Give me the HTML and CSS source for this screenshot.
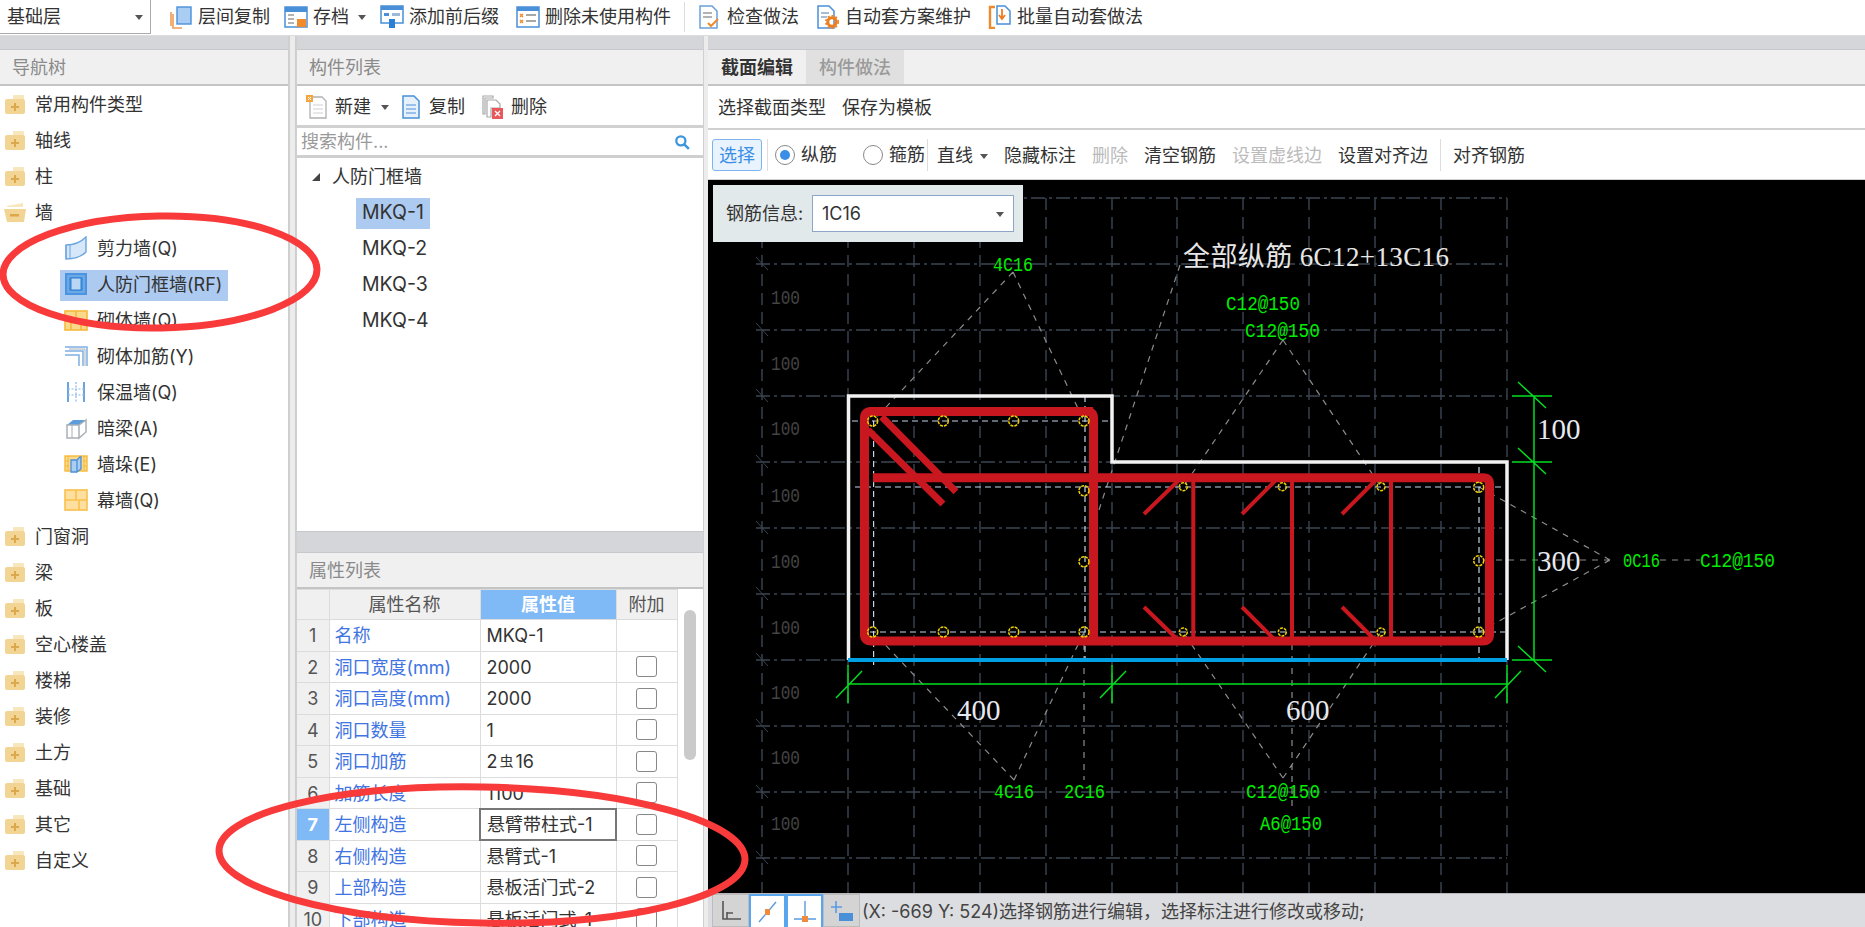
FILE: index.html
```html
<!DOCTYPE html>
<html lang="zh-CN">
<head>
<meta charset="utf-8">
<title>人防门框墙</title>
<link rel="stylesheet" href="styles.css">
</head>
<body>
<svg class="defs" width="0" height="0" aria-hidden="true">
  <symbol id="folder" viewBox="0 0 24 24"><path d="M10 3h10a1 1 0 0 1 1 1v4H10z" fill="#f8e6bd"/><rect x="2" y="7" width="20" height="15" rx="2" fill="#f2d595"/><path d="M11 11h2v3h3v2h-3v3h-2v-3H8v-2h3z" fill="#dca84b"/></symbol>
  <symbol id="folder-open" viewBox="0 0 24 24"><path d="M4 6l16-3v4H4z" fill="#f8e6bd"/><path d="M1 9h22l-2 13H4z" fill="#f2d595"/><rect x="7" y="14" width="9" height="2.5" fill="#dca84b"/></symbol>
  <symbol id="arrow" viewBox="0 0 8 6"><path d="M0 1h8L4 6z" fill="#555"/></symbol>
</svg>

<header class="topbar">
  <div class="combo"><span>基础层</span><svg class="arrow"><use href="#arrow"/></svg></div>
  <div class="tools">
    <button class="tool">
      <svg class="ticon" viewBox="0 0 24 24"><path d="M4 9v14h9M2 7v14" fill="none" stroke="#ee9a55" stroke-width="1.6"/><rect x="8" y="2" width="14" height="17" fill="#a9cdf3" stroke="#4a90d9" stroke-width="1.4"/></svg>
      <span>层间复制</span>
    </button>
    <button class="tool">
      <svg class="ticon" viewBox="0 0 24 24"><rect x="1" y="2" width="22" height="20" fill="#fff" stroke="#4a90d9" stroke-width="1.5"/><rect x="1" y="2" width="22" height="5" fill="#4a90d9"/><path d="M4 10h6M4 14h6M4 18h6" stroke="#9a9a9a" stroke-width="1.4"/><rect x="13" y="14" width="9" height="8" fill="#f08a2c"/></svg>
      <span>存档</span><svg class="arrow arrow-tool"><use href="#arrow"/></svg>
    </button>
    <button class="tool">
      <svg class="ticon" viewBox="0 0 24 24"><rect x="1" y="1" width="22" height="17" fill="#fff" stroke="#4a90d9" stroke-width="1.5"/><rect x="1" y="1" width="22" height="4" fill="#4a90d9"/><rect x="4" y="8" width="5" height="3" fill="#4a90d9"/><rect x="12" y="8" width="8" height="3" fill="#9db8d8"/><rect x="9" y="14" width="6" height="9" fill="#2b7fd4"/></svg>
      <span>添加前后缀</span>
    </button>
    <button class="tool tool-gap">
      <svg class="ticon" viewBox="0 0 24 24"><rect x="1" y="2" width="22" height="20" fill="#fff" stroke="#4a90d9" stroke-width="1.5"/><rect x="1" y="2" width="22" height="4" fill="#4a90d9"/><path d="M4 9l3 3m0-3l-3 3M4 15l3 3m0-3l-3 3" stroke="#f08a2c" stroke-width="1.4"/><path d="M10 10h10M10 16h10" stroke="#8a8a8a" stroke-width="1.5"/></svg>
      <span>删除未使用构件</span>
    </button>
    <i class="vsep"></i>
    <button class="tool">
      <svg class="ticon" viewBox="0 0 24 24"><path d="M2 1h12l5 5v17H2z" fill="#fff" stroke="#6aa0d8" stroke-width="1.5"/><path d="M5 8h9M5 12h9" stroke="#9a9a9a" stroke-width="1.3"/><path d="M10 18l3 3 7-7" fill="none" stroke="#ee8a2e" stroke-width="2"/></svg>
      <span>检查做法</span>
    </button>
    <button class="tool tool-gap">
      <svg class="ticon" viewBox="0 0 24 24"><path d="M2 1h11l5 5v17H2z" fill="#fff" stroke="#4a90d9" stroke-width="1.5"/><path d="M5 8h8M5 12h6" stroke="#8aa8c8" stroke-width="1.3"/><circle cx="16" cy="17" r="4.2" fill="none" stroke="#ee7d1e" stroke-width="3"/><circle cx="16" cy="17" r="6.2" fill="none" stroke="#ee7d1e" stroke-width="1.6" stroke-dasharray="2 2"/></svg>
      <span>自动套方案维护</span>
    </button>
    <button class="tool tool-gap">
      <svg class="ticon" viewBox="0 0 24 24"><path d="M7 2H2v21h5" fill="none" stroke="#ee8a2e" stroke-width="2.4"/><path d="M9 1h8l5 5v13H9z" fill="#fff" stroke="#4a90d9" stroke-width="1.5"/><path d="M14 4v9m-3-3l3 4 3-4" fill="none" stroke="#ee7d1e" stroke-width="1.8"/></svg>
      <span>批量自动套做法</span>
    </button>
  </div>
</header>

<main class="work">
  <aside class="nav">
    <div class="band"></div>
    <div class="phead">导航树</div>
    <ul class="tree">
      <li class="node"><svg class="ficon"><use href="#folder"/></svg>常用构件类型</li>
      <li class="node"><svg class="ficon"><use href="#folder"/></svg>轴线</li>
      <li class="node"><svg class="ficon"><use href="#folder"/></svg>柱</li>
      <li class="node"><svg class="ficon"><use href="#folder-open"/></svg>墙</li>
      <li class="leaf"><span class="leaf-in">
        <svg class="licon" viewBox="0 0 24 24"><path d="M2 9c8 0 15-3 20-8v15c-5 5-12 7-20 7z" fill="#d5e7f8" stroke="#6aa5df" stroke-width="1.4"/><path d="M2 9v14M6 8.6v14" stroke="#6aa5df" stroke-width="1"/></svg>剪力墙(Q)</span></li>
      <li class="leaf"><span class="leaf-in is-sel">
        <svg class="licon" viewBox="0 0 24 24"><rect x="1" y="1" width="22" height="22" fill="#4a94e0"/><rect x="4" y="4" width="16" height="16" fill="none" stroke="#8dbcec" stroke-width="1"/><rect x="7" y="6" width="10" height="12" fill="#b9d6f4" stroke="#2f7fd0"/></svg>人防门框墙(RF)</span></li>
      <li class="leaf"><span class="leaf-in">
        <svg class="licon" viewBox="0 0 24 24"><rect x="1" y="3" width="22" height="19" fill="#fbd98a" stroke="#f6b93a" stroke-width="1.6"/><path d="M1 12h22M12 3v9M7 12v10M17 12v10" stroke="#f6b93a" stroke-width="1.6"/></svg>砌体墙(Q)</span></li>
      <li class="leaf"><span class="leaf-in">
        <svg class="licon" viewBox="0 0 24 24"><path d="M1 3h22v19M1 7h18v15M1 11h14v11" fill="none" stroke="#7fb0e4" stroke-width="1.5"/><path d="M5 5h16v17" fill="none" stroke="#aab2ba" stroke-width="1"/></svg>砌体加筋(Y)</span></li>
      <li class="leaf"><span class="leaf-in">
        <svg class="licon" viewBox="0 0 24 24"><path d="M4 2v20M20 2v20" stroke="#5d9ddd" stroke-width="1.8"/><path d="M12 2v20M4 9h16M4 15h16" stroke="#8ab8e6" stroke-width="1.2" stroke-dasharray="2 1.5"/></svg>保温墙(Q)</span></li>
      <li class="leaf"><span class="leaf-in">
        <svg class="licon" viewBox="0 0 24 24"><path d="M3 9l6-5h13l-7 5z" fill="#5d9ddd"/><path d="M3 9h12v13H3zM15 9l7-5v12l-7 6z" fill="#fff" stroke="#a8b0b8" stroke-width="1.5"/><path d="M8 9v13" stroke="#a8b0b8"/></svg>暗梁(A)</span></li>
      <li class="leaf"><span class="leaf-in">
        <svg class="licon" viewBox="0 0 24 24"><rect x="1" y="4" width="22" height="15" fill="#fbd98a" stroke="#f6b93a" stroke-width="1.4"/><path d="M4 4v15M20 4v15M1 9h4M1 14h4M19 9h4M19 14h4" stroke="#f6b93a"/><path d="M7 8h6v12H7zM13 8l3-3h1v12l-4 3z" fill="#a9cdf3" stroke="#4a90d9" stroke-width="1.3"/></svg>墙垛(E)</span></li>
      <li class="leaf"><span class="leaf-in">
        <svg class="licon" viewBox="0 0 24 24"><rect x="1" y="2" width="22" height="20" fill="#fde0a0" stroke="#f9c04a" stroke-width="1.6"/><path d="M1 12h22M12 2v10M15 12v10" stroke="#f9c04a" stroke-width="1.6"/></svg>幕墙(Q)</span></li>
      <li class="node"><svg class="ficon"><use href="#folder"/></svg>门窗洞</li>
      <li class="node"><svg class="ficon"><use href="#folder"/></svg>梁</li>
      <li class="node"><svg class="ficon"><use href="#folder"/></svg>板</li>
      <li class="node"><svg class="ficon"><use href="#folder"/></svg>空心楼盖</li>
      <li class="node"><svg class="ficon"><use href="#folder"/></svg>楼梯</li>
      <li class="node"><svg class="ficon"><use href="#folder"/></svg>装修</li>
      <li class="node"><svg class="ficon"><use href="#folder"/></svg>土方</li>
      <li class="node"><svg class="ficon"><use href="#folder"/></svg>基础</li>
      <li class="node"><svg class="ficon"><use href="#folder"/></svg>其它</li>
      <li class="node"><svg class="ficon"><use href="#folder"/></svg>自定义</li>
    </ul>
  </aside>
  <div class="split"></div>

  <section class="mid">
    <div class="band"></div>
    <div class="phead">构件列表</div>
    <div class="mid-top">
      <div class="mtools">
        <button class="tool">
          <svg class="micon" viewBox="0 0 22 24"><path d="M4 2h12l4 4v17H4z" fill="#fff" stroke="#b0b0b0" stroke-width="1.3"/><path d="M7 10h10M7 14h10M7 18h10" stroke="#d0d0d0"/><rect x="0" y="0" width="7" height="7" fill="#f6a53c"/><path d="M2 2l3 3m0-3l-3 3" stroke="#fff"/></svg>
          <span>新建</span><svg class="arrow arrow-new"><use href="#arrow"/></svg>
        </button>
        <button class="tool">
          <svg class="micon" viewBox="0 0 22 24"><path d="M3 1h11l5 5v17H3z" fill="#e6f1fb" stroke="#4a90d9" stroke-width="1.5"/><path d="M6 10h10M6 14h10M6 18h10" stroke="#4a90d9" stroke-width="1.2"/></svg>
          <span>复制</span>
        </button>
        <button class="tool">
          <svg class="micon" viewBox="0 0 22 24"><path d="M1 1h10v2H3v16H1zM5 5h9l4 4v4H9v9H5z" fill="#fff" stroke="#a8a8a8" stroke-width="1.2"/><rect x="10" y="13" width="11" height="11" fill="#e8575a"/><path d="M13 16l5 5m0-5l-5 5" stroke="#fff" stroke-width="1.3"/></svg>
          <span>删除</span>
        </button>
      </div>
      <div class="search">
        <span class="ph">搜索构件...</span>
        <svg class="mag" viewBox="0 0 14 14"><circle cx="6" cy="6" r="4" fill="none" stroke="#3c96dc" stroke-width="2"/><path d="M9 9l4 4" stroke="#3c96dc" stroke-width="2.2"/></svg>
      </div>
      <ul class="ctree">
        <li class="croot"><i class="tri"></i>人防门框墙</li>
        <li class="citem"><span class="cpill is-sel">MKQ-1</span></li>
        <li class="citem"><span class="cpill">MKQ-2</span></li>
        <li class="citem"><span class="cpill">MKQ-3</span></li>
        <li class="citem"><span class="cpill">MKQ-4</span></li>
      </ul>
    </div>
    <div class="band band-mid"></div>
    <div class="phead">属性列表</div>
    <div class="props">
      <table class="ptable">
        <colgroup><col class="c1"><col class="c2"><col class="c3"><col class="c4"></colgroup>
        <thead><tr><th></th><th>属性名称</th><th class="on">属性值</th><th>附加</th></tr></thead>
        <tbody>
          <tr><td class="idx">1</td><td class="nm">名称</td><td class="val">MKQ-1</td><td></td></tr>
          <tr><td class="idx">2</td><td class="nm">洞口宽度(mm)</td><td class="val">2000</td><td class="ck"><i></i></td></tr>
          <tr><td class="idx">3</td><td class="nm">洞口高度(mm)</td><td class="val">2000</td><td class="ck"><i></i></td></tr>
          <tr><td class="idx">4</td><td class="nm">洞口数量</td><td class="val">1</td><td class="ck"><i></i></td></tr>
          <tr><td class="idx">5</td><td class="nm">洞口加筋</td><td class="val">2<span class="rebar">虫</span>16</td><td class="ck"><i></i></td></tr>
          <tr><td class="idx">6</td><td class="nm">加筋长度</td><td class="val">1100</td><td class="ck"><i></i></td></tr>
          <tr><td class="idx on">7</td><td class="nm">左侧构造</td><td class="val active">悬臂带柱式-1</td><td class="ck"><i></i></td></tr>
          <tr><td class="idx">8</td><td class="nm">右侧构造</td><td class="val">悬臂式-1</td><td class="ck"><i></i></td></tr>
          <tr><td class="idx">9</td><td class="nm">上部构造</td><td class="val">悬板活门式-2</td><td class="ck"><i></i></td></tr>
          <tr><td class="idx">10</td><td class="nm">下部构造</td><td class="val">悬板活门式-1</td><td class="ck"><i></i></td></tr>
        </tbody>
      </table>
      <div class="sbar"><i></i></div>
    </div>
  </section>
  <div class="split split-r"></div>

  <section class="right">
    <div class="band"></div>
    <div class="tabs"><span class="tab is-on">截面编辑</span><span class="tab">构件做法</span></div>
    <div class="bar2"><button class="tb">选择截面类型</button><button class="tb">保存为模板</button></div>
    <div class="bar3">
      <button class="tb sel">选择</button><i class="vsep s3"></i>
      <label class="radio"><i class="rd on"></i>纵筋</label>
      <label class="radio r2"><i class="rd"></i>箍筋</label><i class="vsep s3b"></i>
      <button class="tb">直线<svg class="arrow arrow-line"><use href="#arrow"/></svg></button>
      <button class="tb">隐藏标注</button>
      <button class="tb off">删除</button>
      <button class="tb">清空钢筋</button>
      <button class="tb off">设置虚线边</button>
      <button class="tb">设置对齐边</button><i class="vsep s3c"></i>
      <button class="tb">对齐钢筋</button>
    </div>
    <div class="canvas">
      <svg class="draw" viewBox="708 180 1157 713" preserveAspectRatio="none">
        <path class="grid" d="M756 198H1507M756 264H1507M756 330H1507M756 396H1507M756 462H1507M756 528H1507M756 594H1507M756 660H1507M756 726H1507M756 792H1507M756 858H1507"/>
        <path class="grid gv" d="M762 198V893M848 198V893M914 198V893M980 198V893M1046 198V893M1112 198V893M1177 198V893M1243 198V893M1309 198V893M1375 198V893M1441 198V893M1507 198V893"/>
        <path class="gtick" d="M756 257l12 13M756 323l12 13M756 389l12 13M756 455l12 13M756 521l12 13M756 587l12 13M756 653l12 13M756 719l12 13M756 785l12 13M756 851l12 13"/>
        <g class="gnum">
          <text x="771" y="304" textLength="29" lengthAdjust="spacingAndGlyphs">100</text>
          <text x="771" y="370" textLength="29" lengthAdjust="spacingAndGlyphs">100</text>
          <text x="771" y="435" textLength="29" lengthAdjust="spacingAndGlyphs">100</text>
          <text x="771" y="502" textLength="29" lengthAdjust="spacingAndGlyphs">100</text>
          <text x="771" y="568" textLength="29" lengthAdjust="spacingAndGlyphs">100</text>
          <text x="771" y="634" textLength="29" lengthAdjust="spacingAndGlyphs">100</text>
          <text x="771" y="699" textLength="29" lengthAdjust="spacingAndGlyphs">100</text>
          <text x="771" y="764" textLength="29" lengthAdjust="spacingAndGlyphs">100</text>
          <text x="771" y="830" textLength="29" lengthAdjust="spacingAndGlyphs">100</text>
        </g>
        <path class="lead" d="M1013 272L873 421M1013 272L1084 421M1180 265L1093 528M1283 340L1183 487M1283 340L1381 487M1014 780L873 632M1014 780L1084 632M1084 632V780M1283 778L1183 632M1283 778L1381 632M1292 560V810M1610 560L1479 487M1610 560H1479M1610 560L1479 632M1660 560H1700"/>
        <path class="inner" d="M852 421H1110M855 487H1505M860 632H1505M873.6 421V665M1085 396V665M1479 467V660"/>
        <path class="conc" d="M848.5 660V396H1112V462H1507V660"/>
        <path class="blue" d="M848 660H1507"/>
        <path class="bar-l" d="M869 411.5H1087Q1093.5 411.5 1093.5 418V641"/>
        <path class="bar-l" d="M1093 411.5H871Q864.5 411.5 864.5 418V634.5Q864.5 641 871 641H1483Q1489.5 641 1489.5 634.5V484Q1489.5 477.7 1483 477.7H873"/>
        <path class="bar-m" d="M881.7 416.7L956 491.7M868 430L943 504"/>
        <path class="bar-s" d="M1144 514L1178 481M1144 607L1178 640M1242 514L1275 481M1242 607L1275 640M1342 514L1375 481M1342 607L1375 640M1193.3 477V641M1292 477V641M1391 477V641"/>
        <g class="pt">
          <circle cx="872.7" cy="421" r="5"/><circle cx="943.3" cy="421" r="5"/><circle cx="1013.7" cy="421" r="5"/><circle cx="1084" cy="421" r="5"/>
          <circle cx="1084" cy="490.7" r="5"/><circle cx="1084" cy="561.7" r="5"/>
          <circle cx="872.7" cy="632" r="5"/><circle cx="943.3" cy="632" r="5"/><circle cx="1013.7" cy="632" r="5"/><circle cx="1084" cy="632" r="5"/>
          <circle cx="1183.3" cy="486.7" r="4"/><circle cx="1282.3" cy="486.7" r="4"/><circle cx="1381" cy="486.7" r="4"/>
          <circle cx="1183.3" cy="632" r="4"/><circle cx="1282.3" cy="632" r="4"/><circle cx="1381" cy="632" r="4"/>
          <circle cx="1478.7" cy="487.3" r="5"/><circle cx="1478.7" cy="560.7" r="5"/><circle cx="1478.7" cy="632" r="5"/>
        </g>
        <path class="dim" d="M1534 396V660M1512 396H1552M1512 462H1552M1512 660H1552M1518 382L1546 408M1518 448L1546 474M1518 646L1546 672M848 684H1507M848 665V703M1112 665V703M1507 665V703M836 698L862 671M1100 698L1126 671M1495 698L1521 671"/>
        <g class="gtxt">
          <text x="993" y="271" textLength="40" lengthAdjust="spacingAndGlyphs">4C16</text>
          <text x="1226" y="310" textLength="74" lengthAdjust="spacingAndGlyphs">C12@150</text>
          <text x="1245" y="337" textLength="75" lengthAdjust="spacingAndGlyphs">C12@150</text>
          <text x="994" y="798" textLength="40" lengthAdjust="spacingAndGlyphs">4C16</text>
          <text x="1064" y="798" textLength="41" lengthAdjust="spacingAndGlyphs">2C16</text>
          <text x="1246" y="798" textLength="74" lengthAdjust="spacingAndGlyphs">C12@150</text>
          <text x="1260" y="830" textLength="62" lengthAdjust="spacingAndGlyphs">A6@150</text>
          <text x="1623" y="567" textLength="37" lengthAdjust="spacingAndGlyphs">0C16</text>
          <text x="1700" y="567" textLength="75" lengthAdjust="spacingAndGlyphs">C12@150</text>
        </g>
        <text class="title" x="1183" y="266" textLength="266">全部纵筋 6C12+13C16</text>
        <g class="dtxt">
          <text x="957" y="720">400</text>
          <text x="1286" y="720">600</text>
          <text x="1537" y="439">100</text>
          <text x="1537" y="571">300</text>
        </g>
      </svg>
      <div class="rinfo">
        <span class="rlabel">钢筋信息:</span>
        <div class="rcombo"><span>1C16</span><svg class="arrow"><use href="#arrow"/></svg></div>
      </div>
    </div>
    <footer class="status">
      <button class="sbtn"><svg viewBox="0 0 24 24"><path d="M4 2v18h18M8 13v7M8 14h6" fill="none" stroke="#555" stroke-width="1.6"/></svg></button>
      <button class="sbtn act"><svg viewBox="0 0 24 24"><path d="M3 22L20 2" stroke="#5a9be0" stroke-width="1.4"/><rect x="9" y="9" width="5" height="6" fill="#f08a3c"/></svg></button>
      <button class="sbtn act"><svg viewBox="0 0 24 24"><path d="M12 1v19M1 19h22" stroke="#5a9be0" stroke-width="1.4"/><rect x="9" y="16" width="6" height="6" fill="#f08a3c"/></svg></button>
      <button class="sbtn"><svg viewBox="0 0 24 24"><path d="M6 2v12M1 8h11" stroke="#5a9be0" stroke-width="1.6"/><rect x="9" y="14" width="14" height="8" fill="#4a90d9"/></svg></button>
      <span class="stext">(X: -669 Y: 524)选择钢筋进行编辑，选择标注进行修改或移动;</span>
    </footer>
  </section>
</main>

<svg class="marks" viewBox="0 0 1865 927" aria-hidden="true">
  <ellipse cx="160" cy="272" rx="157" ry="56" transform="rotate(-1 160 272)"/>
  <ellipse cx="482" cy="855" rx="263" ry="68" transform="rotate(1 482 855)"/>
</svg>
</body>
</html>
```

FILE: styles.css
```css
* { box-sizing: border-box; }
html, body { margin: 0; height: 100%; }
body {
  display: flex;
  flex-direction: column;
  height: 100vh;
  overflow: hidden;
  position: relative;
  background: #fff;
  color: #333;
  font: 18px/1 Inter, "Noto Sans CJK SC", sans-serif;
}
ul { margin: 0; padding: 0; list-style: none; }
button { font: inherit; color: inherit; background: none; border: 0; padding: 0; cursor: default; }
i { display: block; font-style: normal; }
.defs { position: absolute; }

/* top bar */
.topbar { flex: none; height: 36px; display: flex; border-bottom: 1px solid #ddd; }
.combo {
  width: 151px; height: 34px; padding: 0 7px;
  display: flex; align-items: center; justify-content: space-between;
  border: 1px solid #aaa; border-top: 0; border-left: 0;
}
.arrow { width: 8px; height: 6px; flex: none; }
.tools { display: flex; gap: 2px; padding-left: 12px; height: 34px; }
.tool { display: flex; align-items: center; padding: 0 6px; gap: 5px; white-space: nowrap; }
.tool-gap { margin-left: 3px; }
.ticon { width: 24px; height: 24px; flex: none; }
.arrow-tool { margin-left: 4px; }
.vsep { width: 1px; background: #ddd; margin: 2px 5px; }

/* columns */
.work { flex: 1; display: flex; min-height: 0; }
.band { height: 14px; flex: none; background: #d4d6da; border-bottom: 1px solid #c6c8cc; }
.phead {
  flex: none; height: 36px; padding: 2px 0 0 12px;
  display: flex; align-items: center;
  background: #f0f0f0; color: #8a8a8a;
  border-bottom: 2px solid #c4c4c4;
}
.nav { width: 288px; flex: none; display: flex; flex-direction: column; }
.split { width: 8px; flex: none; background: #ececec; border-left: 2px solid #cfcfcf; border-right: 1px solid #cfcfcf; }
.split-r { width: 5px; border-right: 0; border-left: 1px solid #d0d0d0; }

/* nav tree */
.tree { padding-top: 1px; }
.node, .leaf { height: 36px; display: flex; align-items: center; }
.ficon { width: 24px; height: 24px; margin: 0 8px 3px 3px; flex: none; }
.leaf { padding-left: 60px; }
.leaf-in { display: flex; align-items: center; height: 31px; padding: 0 6px 0 4px; }
.is-sel { background: #adcaf0; }
.licon { width: 24px; height: 24px; margin: 0 9px 2px 0; flex: none; }

/* middle */
.mid { width: 407px; flex: none; display: flex; flex-direction: column; border-left: 1px solid #d0d0d0; }
.mid-top { flex: none; height: 445px; }
.mtools { height: 42px; display: flex; align-items: center; padding: 2px 0 0 2px; border-bottom: 3px solid #d0d0d0; }
.mtools .tool { gap: 7px; height: 35px; padding: 0 7px; }
.mtools .tool:first-child { padding-right: 4px; }
.mtools .tool:last-child { margin-left: 3px; }
.micon { width: 22px; height: 24px; flex: none; }
.arrow-new { margin-left: 3px; }
.search { height: 30px; display: flex; align-items: center; justify-content: space-between; padding: 0 13px 0 4px; border-bottom: 3px solid #cfcfcf; }
.ph { color: #9a9a9a; }
.mag { width: 16px; height: 16px; }
.ctree { padding-top: 1px; }
.croot, .citem { height: 36px; display: flex; align-items: center; }
.croot { padding-left: 15px; }
.tri { width: 0; height: 0; margin-right: 12px; border-left: 8px solid transparent; border-bottom: 8px solid #444; }
.citem { padding-left: 59px; font-size: 19.5px; }
.cpill { height: 31px; padding: 0 6px; display: flex; align-items: center; }
.band-mid { height: 22px; border-top: 1px solid #c6c8cc; }

/* property table */
.props { flex: 1; min-height: 0; display: flex; overflow: hidden; }
.ptable { width: 380px; flex: none; height: fit-content; border-collapse: collapse; table-layout: fixed; font-size: 18px; }
.c1 { width: 32px; } .c2 { width: 151px; } .c3 { width: 136px; } .c4 { width: 61px; }
.ptable th, .ptable td { border: 1px solid #dcdcdc; height: 31.5px; padding: 2px 0 0; font-weight: 400; white-space: nowrap; overflow: hidden; }
.ptable th { height: 30px; padding-top: 0; background: #f0f0f0; color: #555; text-align: center; }
.ptable th:first-child { border-left: 0; }
.ptable th.on, .ptable td.on { background: #7fb9f6; color: #fff; font-weight: 700; }
.idx { background: #f0f0f0; color: #555; text-align: center; }
.ptable .idx { border-left: 0; }
.ptable .nm { color: #3f74e2; padding-left: 5px; }
.ptable .val { color: #333; padding-left: 6px; }
.ptable td.active { border: 2px solid #777; }
.ptable .ck { padding-top: 0; }
.rebar { font-size: 14px; margin: 0 2px; vertical-align: 2px; }
.ck i { width: 21px; height: 21px; margin: 0 auto; border: 1px solid #888; border-radius: 3px; background: #fff; }
.sbar { flex: 1; padding: 21px 7px 0 6px; }
.sbar i { height: 150px; border-radius: 6px; background: #cacaca; }

/* right */
.right { flex: 1; min-width: 0; display: flex; flex-direction: column; }
.tabs { flex: none; height: 36px; display: flex; background: #f0f0f0; border-bottom: 2px solid #c4c4c4; }
.tab { width: 98px; padding-top: 2px; display: flex; align-items: center; justify-content: center; background: #e0e0e0; color: #9a9a9a; font-weight: 500; }
.tab.is-on { background: #f0f0f0; color: #333; font-weight: 700; }
.bar2 { flex: none; height: 44px; display: flex; align-items: center; padding-left: 2px; border-bottom: 2px solid #d0d0d0; }
.tb { height: 32px; padding: 2px 8px 0; display: flex; align-items: center; white-space: nowrap; }
.bar3 { flex: none; height: 50px; display: flex; align-items: center; padding-left: 4px; border-bottom: 1px solid #d0d0d0; }
.tb.sel { width: 50px; padding: 2px 0 0; justify-content: center; background: #e9f3fd; color: #3a8ee6; border: 1px solid #7cb4f0; border-radius: 3px; }
.tb.off { color: #bbb; }
.s3 { height: 32px; margin: 0 5px; width: 1px; }
.s3b { height: 32px; margin: 0 1px 0 2px; width: 1px; }
.s3c { height: 32px; margin: 0 4px; width: 1px; }
.radio { display: flex; align-items: center; width: 88px; padding-left: 2px; gap: 6px; white-space: nowrap; }
.radio.r2 { width: 64px; }
.rd { width: 20px; height: 20px; border: 1px solid #888; border-radius: 50%; background: #fff; flex: none; position: relative; }
.rd.on::after { content: ""; position: absolute; left: 4px; top: 4px; width: 10px; height: 10px; border-radius: 50%; background: #3a8ee6; }
.arrow-line { margin-left: 7px; }

.canvas { flex: 1; min-height: 0; position: relative; background: #000; }
.draw { display: block; width: 100%; height: 100%; }
.rinfo {
  position: absolute; left: 5px; top: 5px; width: 310px; height: 57px;
  display: flex; align-items: center; padding-left: 13px;
  background: #e2e9eb;
}
.rlabel { width: 86px; flex: none; }
.rcombo {
  width: 202px; height: 37px; padding: 0 9px;
  display: flex; align-items: center; justify-content: space-between;
  background: #fff; border: 1px solid #8ea5c9;
}
.grid { fill: none; stroke: #3b4552; stroke-width: 1.4; stroke-dasharray: 14 4 3 4; }
.gv { stroke-dasharray: 12 7; }
.gtick { fill: none; stroke: #3b4552; stroke-width: 1; }
.gnum text { fill: #444; font: 20px "Liberation Mono", monospace; }
.lead { fill: none; stroke: #8c8c8c; stroke-width: 1.2; stroke-dasharray: 6 6; }
.inner { fill: none; stroke: #c3d6ea; stroke-width: 1.2; stroke-dasharray: 6 4; }
.conc { fill: none; stroke: #f2f2f2; stroke-width: 3.5; }
.blue { fill: none; stroke: #00a0e4; stroke-width: 4; }
.bar-l { fill: none; stroke: #c8171f; stroke-width: 9; }
.bar-m { fill: none; stroke: #c8171f; stroke-width: 7; }
.bar-s { fill: none; stroke: #c8171f; stroke-width: 4; }
.pt circle { fill: none; stroke: #efd000; stroke-width: 1.5; stroke-dasharray: 3 1; }
.dim { fill: none; stroke: #00e020; stroke-width: 1.5; }
.gtxt text { fill: #00ee00; font: 20px "Liberation Mono", monospace; }
.title { fill: #e6e6e6; font: 27px "Liberation Serif", "Noto Sans CJK SC", serif; }
.dtxt text { fill: #e6eaf0; font: 29px "Liberation Serif", serif; }

.status { flex: none; height: 34px; display: flex; align-items: stretch; padding-left: 4px; background: #dcdde0; border-top: 1px solid #b8b8b8; }
.sbtn { width: 37px; display: flex; align-items: center; justify-content: center; background: #d4d4d4; border: 1px solid #bcbcbc; }
.sbtn svg { width: 24px; height: 24px; }
.sbtn.act { background: #fff; border: 2px solid #5aa6ee; border-bottom: 0; }
.stext { margin: 2px 0 0 2px; align-self: center; white-space: nowrap; color: #444; }

/* hand-drawn annotations over the screenshot */
.marks { position: absolute; left: 0; top: 0; width: 1865px; height: 927px; pointer-events: none; }
.marks ellipse { fill: none; stroke: #f83a3a; stroke-width: 7; }
```
